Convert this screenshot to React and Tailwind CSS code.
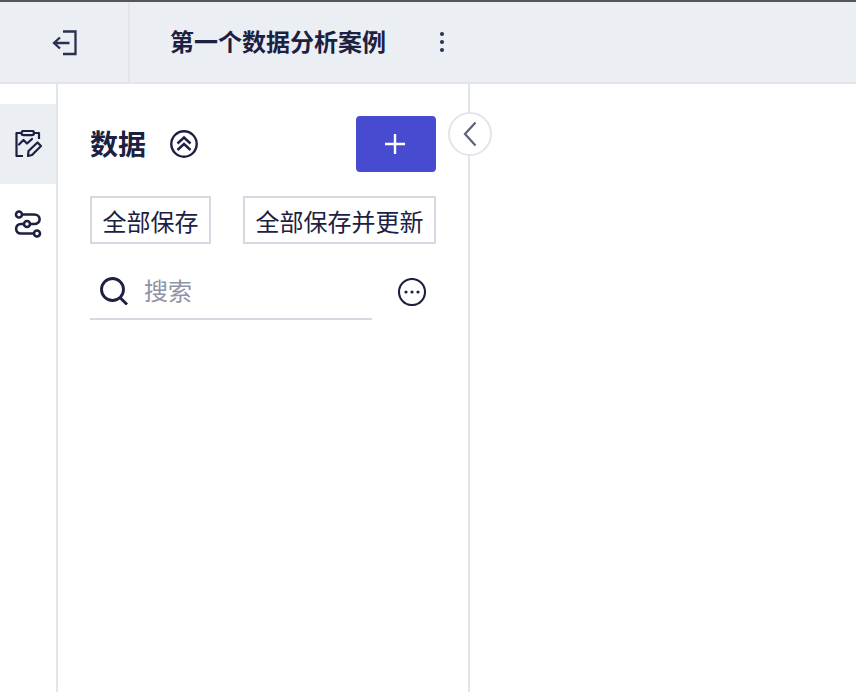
const ink = "#1c2142";

function ExitIcon() {
  return (
    <svg width="28" height="28" viewBox="0 0 28 28" fill="none" stroke="#2b3050" strokeWidth="2.3">
      <path d="M13 3.5H25.5V26H13" />
      <path d="M19.5 15H4M10 9.5L4 15L10 20.5" />
    </svg>
  );
}

function ReportIcon() {
  return (
    <svg width="28" height="28" viewBox="0 0 28 28" fill="none" stroke={ink} strokeWidth="2.2" strokeLinejoin="round" strokeLinecap="round">
      <path d="M7 3H2.5V26H9" strokeLinecap="butt" />
      <path d="M21 3H25V9" strokeLinecap="butt" />
      <rect x="7.5" y="0.8" width="12.5" height="4.4" rx="2.2" />
      <path d="M5 14.5L9.5 10L13 13.5L18 9" />
      <path d="M14 26L14.5 21L23.5 12.5L27 16L18 25Z" />
    </svg>
  );
}

function FlowIcon() {
  return (
    <svg width="28" height="28" viewBox="0 0 28 28" fill="none" stroke={ink} strokeWidth="2.6">
      <circle cx="5" cy="4.5" r="3" />
      <circle cx="13" cy="14" r="3" />
      <circle cx="23" cy="23.5" r="3" />
      <path d="M8 4.5H20C27.5 4.5 27.5 14 20 14H16" />
      <path d="M10 14H7C0.5 14 0.5 23.5 7 23.5H20" />
    </svg>
  );
}

function CollapseIcon() {
  return (
    <svg width="28" height="28" viewBox="0 0 28 28" fill="none" stroke={ink} strokeWidth="2.4">
      <circle cx="14" cy="14" r="12.7" />
      <path d="M7.5 13.5L14 7.5L20.5 13.5M7.5 20L14 14L20.5 20" />
    </svg>
  );
}

function SearchIcon() {
  return (
    <svg width="28" height="28" viewBox="0 0 28 28" fill="none" stroke={ink} strokeWidth="2.9">
      <circle cx="12.5" cy="12.5" r="11" />
      <path d="M20.5 21L27 27.5" />
    </svg>
  );
}

function MoreCircleIcon() {
  return (
    <svg width="28" height="28" viewBox="0 0 28 28" fill="none">
      <circle cx="14" cy="14" r="13" stroke={ink} strokeWidth="2.1" />
      <circle cx="8" cy="14" r="1.6" fill={ink} />
      <circle cx="14" cy="14" r="1.6" fill={ink} />
      <circle cx="20" cy="14" r="1.6" fill={ink} />
    </svg>
  );
}

export default function App() {
  return (
    <div
      className="w-[856px] h-[692px] overflow-hidden bg-white flex flex-col text-[#1c2142]"
      style={{ fontFamily: '"Inter", "Noto Sans CJK SC", sans-serif' }}
    >
      <div className="h-[2px] shrink-0 bg-[#55565a]" />
      <header className="h-[82px] shrink-0 flex bg-[#ebeef3] border-b-2 border-[#e2e5ec]">
        <div className="w-[130px] shrink-0 flex items-center justify-center border-r-2 border-[#e2e5ec]">
          <ExitIcon />
        </div>
        <div className="flex items-center pl-[40px]">
          <h1 className="m-0 pt-[2px] text-2xl font-semibold leading-none w-[216px] tracking-normal">第一个数据分析案例</h1>
          <div className="ml-[54px] flex flex-col gap-[4px]">
            <span className="w-[4px] h-[4px] rounded-full bg-[#2b3050]" />
            <span className="w-[4px] h-[4px] rounded-full bg-[#2b3050]" />
            <span className="w-[4px] h-[4px] rounded-full bg-[#2b3050]" />
          </div>
        </div>
      </header>

      <div className="flex-1 flex min-h-0">
        <nav className="w-[58px] shrink-0 border-r-2 border-[#e2e5ec] pt-5">
          <div className="h-20 bg-[#ebeef3] flex items-center justify-center">
            <ReportIcon />
          </div>
          <div className="h-20 flex items-center justify-center">
            <FlowIcon />
          </div>
        </nav>

        <aside className="relative w-[412px] shrink-0 border-r-2 border-[#e2e5ec] pl-8 pr-8 pt-8">
          <div className="flex items-center h-14">
            <h2 className="m-0 pt-[1px] text-[28px] font-semibold leading-none w-[54px] tracking-normal whitespace-nowrap">数据</h2>
            <span className="ml-[26px] flex"><CollapseIcon /></span>
            <button className="ml-auto w-20 h-14 rounded bg-[#474bcf] flex items-center justify-center">
              <svg className="-ml-[2px]" width="22" height="22" viewBox="0 0 22 22" stroke="#fff" strokeWidth="2.4">
                <path d="M11 1V21M1 11H21" />
              </svg>
            </button>
          </div>

          <div className="flex justify-between mt-6">
            <button className="h-12 w-[121px] border-2 border-[#d6d9e1] pt-[5px] text-2xl leading-none tracking-normal">全部保存</button>
            <button className="h-12 w-[193px] border-2 border-[#d6d9e1] pt-[5px] text-2xl leading-none tracking-normal">全部保存并更新</button>
          </div>

          <div className="flex items-center justify-between mt-5">
            <div className="w-[282px] h-14 flex items-center border-b-2 border-[#d6d9e1] pl-[10px]">
              <SearchIcon />
              <span className="ml-4 pt-[2px] text-2xl leading-none text-[#8f93a4]">搜索</span>
            </div>
            <span className="flex mr-[10px] -mt-[1px]"><MoreCircleIcon /></span>
          </div>

          <button className="absolute left-[390px] top-[28px] w-11 h-11 rounded-full bg-white border-2 border-[#e2e5ec] flex items-center justify-center">
            <svg width="14" height="26" viewBox="0 0 14 26" fill="none" stroke="#5b6079" strokeWidth="2.2">
              <path d="M12.5 1.5L2 13L12.5 24.5" />
            </svg>
          </button>
        </aside>

        <main className="flex-1 bg-white" />
      </div>
    </div>
  );
}
